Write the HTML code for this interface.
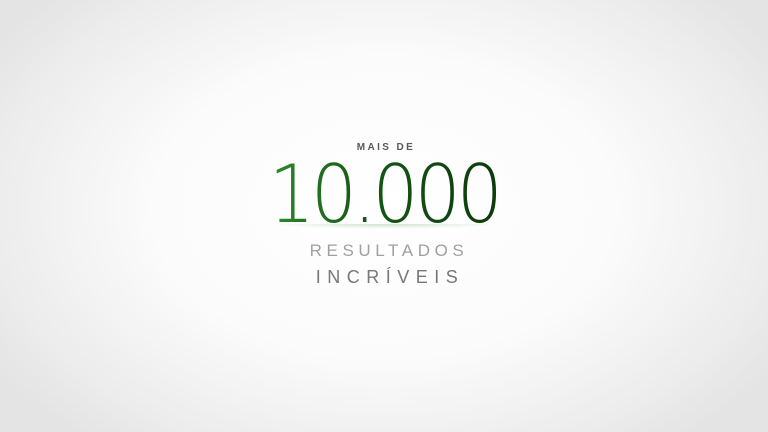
<!DOCTYPE html>
<html><head><style>
html,body{margin:0;width:768px;height:432px;overflow:hidden}
body{background:radial-gradient(ellipse 60% 70% at 50% 48%,#ffffff 0%,#fbfbfb 50%,#ececec 85%,#e4e4e4 100%);font-family:"Liberation Sans",sans-serif;position:relative}
.t{position:absolute;left:0;width:768px;text-align:center;white-space:nowrap}
.m{top:142px;font-size:10px;font-weight:bold;letter-spacing:2.4px;color:#5a5a5a;padding-left:2px}
.nw{position:absolute;top:150px;left:0;width:768px;text-align:center}
.n{display:inline-block;font-family:"DejaVu Sans ExtraLight","DejaVu Sans",sans-serif;font-weight:200;font-size:80px;letter-spacing:-4px;line-height:90px;transform:scaleX(0.9);background:linear-gradient(90deg,#2e8a2e,#145a14 40%,#0b3a0b);-webkit-background-clip:text;background-clip:text;color:transparent}
.r{top:241px;font-size:17px;letter-spacing:4.6px;color:#a0a0a0;padding-left:5px}
.i{top:267px;font-size:18px;letter-spacing:6.5px;color:#777;padding-left:6px}
.refl{position:absolute;top:224px;left:272px;width:226px;height:12px;background:radial-gradient(ellipse 50% 40% at 50% 0,rgba(60,140,60,.25),transparent);}
</style></head><body>
<div class="t m">MAIS DE</div>
<div class="nw"><span class="n">10.000</span></div>
<div class="refl"></div>
<div class="t r">RESULTADOS</div>
<div class="t i">INCRÍVEIS</div>
</body></html>
